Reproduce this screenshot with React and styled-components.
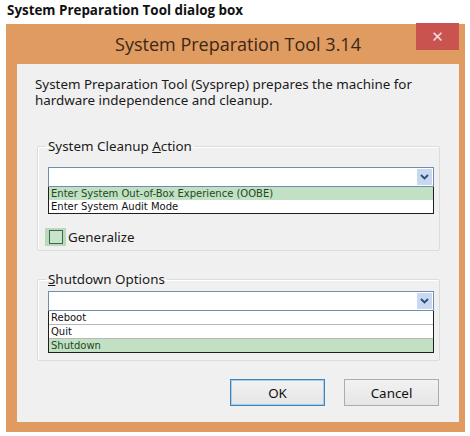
import React from "react";
import styled, { createGlobalStyle } from "styled-components";

const Global = createGlobalStyle`
  body {
    margin: 0;
    background: #ffffff;
    font-family: "Noto Sans", "Liberation Sans", sans-serif;
  }
`;

const Page = styled.div`
  width: 470px;
  height: 436px;
  background: #fff;
  overflow: hidden;
`;

const Caption = styled.div`
  padding: 2px 0 0 7px;
  height: 22px;
  box-sizing: border-box;
  font-family: "Open Sans", "Noto Sans", sans-serif;
  font-weight: 700;
  font-size: 13.4px;
  line-height: 16px;
  color: #111;
`;

const Dialog = styled.div`
  margin-left: 6px;
  margin-top: 2px;
  width: 459px;
  background: #df9b60;
  padding: 0 6px 10px 11px;
  box-sizing: border-box;
`;

const TitleBar = styled.div`
  display: grid;
  grid-template-columns: 1fr auto 1fr;
  align-items: start;
  height: 40px;
`;

const Title = styled.div`
  grid-column: 2;
  padding-top: 8px;
  font-family: "Open Sans", "Noto Sans", sans-serif;
  font-size: 18px;
  line-height: 24px;
  color: #3b2718;
`;

const Close = styled.div`
  grid-column: 3;
  justify-self: end;
  margin-top: -1px;
  width: 43px;
  height: 27px;
  background: #c9534f;
  color: #f3dede;
  display: flex;
  align-items: center;
  justify-content: center;
  font-size: 15px;
  font-family: "DejaVu Sans", sans-serif;
`;

const Body = styled.div`
  background: #f0f0f0;
  height: 358px;
  padding: 12px 0 0 18px;
  box-sizing: border-box;
`;

const Description = styled.p`
  margin: 0;
  font-size: 13.4px;
  line-height: 16px;
  color: #1a1a1a;
  width: 410px;
`;

const Group = styled.fieldset`
  margin: ${(p) => p.$top}px 0 0 2px;
  width: 403px;
  height: ${(p) => p.$height}px;
  box-sizing: border-box;
  border: 1px solid #dcdcdc;
  border-radius: 2px;
  padding: ${(p) => p.$pad}px 0 0 10px;
  box-shadow: inset 1px 1px 0 #fff;
`;

const Legend = styled.legend`
  padding: 0 2px;
  margin-left: -2px;
  font-size: 13.4px;
  line-height: 16px;
  color: #1a1a1a;
`;

const Combo = styled.div`
  display: flex;
  width: 386px;
  height: 20px;
  box-sizing: border-box;
  border: 1px solid #6f8eab;
  background: #fff;
  justify-content: flex-end;
`;

const DropButton = styled.div`
  width: 15px;
  margin: 1px;
  background: #c8d8f0;
  display: flex;
  align-items: center;
  justify-content: center;
  color: #2c4a7a;
`;

const List = styled.div`
  width: 386px;
  box-sizing: border-box;
  border: 1px solid #1e1e1e;
  border-top: none;
  background: #fff;
`;

const Item = styled.div`
  height: 13px;
  padding-left: 2px;
  font-family: "DejaVu Sans", Verdana, sans-serif;
  font-size: 10px;
  line-height: 13px;
  color: ${(p) => (p.$selected ? "#1d4a1d" : "#111")};
  background: ${(p) => (p.$selected ? "#c2e0c4" : "#fff")};
  border-bottom: ${(p) => (p.$divided ? "1px solid #b8b8b8" : "none")};
`;

const CheckRow = styled.label`
  display: flex;
  align-items: center;
  margin: 14px 0 0 -3px;
  font-size: 13.4px;
  line-height: 18px;
  color: #1a1a1a;
  gap: 2px;
`;

const CheckBox = styled.span`
  width: 21px;
  height: 18px;
  box-sizing: border-box;
  background: #b9d9bd;
  display: flex;
  align-items: center;
  justify-content: center;
`;

const CheckInner = styled.span`
  width: 12px;
  height: 12px;
  border: 1px solid #3b6a48;
  background: #c8e3cb;
`;

const Buttons = styled.div`
  display: flex;
  gap: 19px;
  margin: 18px 0 0 195px;
`;

const Button = styled.div`
  width: 95px;
  height: 27px;
  box-sizing: border-box;
  border: 1px solid ${(p) => (p.$primary ? "#3c86c0" : "#acacac")};
  box-shadow: ${(p) => (p.$primary ? "inset 0 0 0 1px #a8cde8" : "none")};
  background: linear-gradient(#f2f2f2, #e5e5e5);
  display: flex;
  align-items: center;
  justify-content: center;
  font-size: 13.4px;
  color: #111;
`;

const U = styled.span`
  text-decoration: underline;
`;

function Chevron() {
  return (
    <svg width="9" height="6" viewBox="0 0 9 6">
      <path d="M1 1 L4.5 4.5 L8 1" fill="none" stroke="currentColor" strokeWidth="1.8" />
    </svg>
  );
}

function DropDown({ items }) {
  return (
    <>
      <Combo>
        <DropButton>
          <Chevron />
        </DropButton>
      </Combo>
      <List>
        {items.map((it) => (
          <Item key={it.label} $selected={it.selected} $divided={it.divided}>
            {it.label}
          </Item>
        ))}
      </List>
    </>
  );
}

export default function App() {
  return (
    <Page>
      <Global />
      <Caption>System Preparation Tool dialog box</Caption>
      <Dialog>
        <TitleBar>
          <Title>System Preparation Tool 3.14</Title>
          <Close>✕</Close>
        </TitleBar>
        <Body>
          <Description>
            System Preparation Tool (Sysprep) prepares the machine for hardware
            independence and cleanup.
          </Description>
          <Group $top={30} $height={113} $pad={13}>
            <Legend>
              System Cleanup <U>A</U>ction
            </Legend>
            <DropDown
              items={[
                { label: "Enter System Out-of-Box Experience (OOBE)", selected: true },
                { label: "Enter System Audit Mode" },
              ]}
            />
            <CheckRow>
              <CheckBox>
                <CheckInner />
              </CheckBox>
              Generalize
            </CheckRow>
          </Group>
          <Group $top={20} $height={90} $pad={4}>
            <Legend>
              <U>S</U>hutdown Options
            </Legend>
            <DropDown
              items={[
                { label: "Reboot", divided: true },
                { label: "Quit", divided: true },
                { label: "Shutdown", selected: true },
              ]}
            />
          </Group>
          <Buttons>
            <Button $primary>OK</Button>
            <Button>Cancel</Button>
          </Buttons>
        </Body>
      </Dialog>
    </Page>
  );
}
